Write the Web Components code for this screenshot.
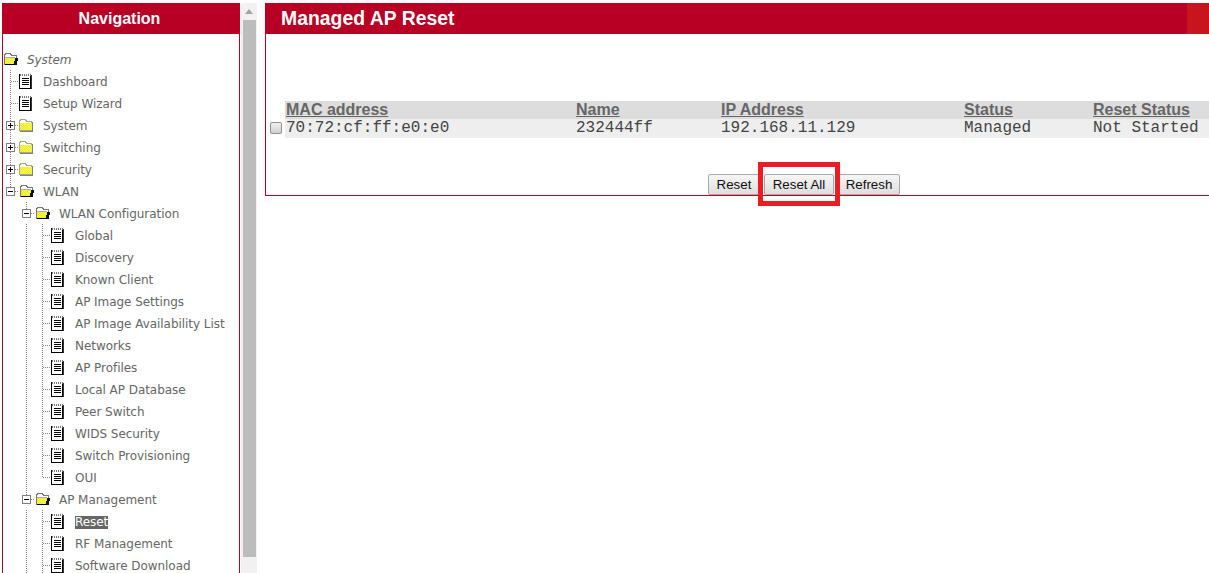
<!DOCTYPE html>
<html lang="en">
<head>
<meta charset="UTF-8">
<title>Managed AP Reset</title>
<style>
    html, body { margin: 0; height: 100%; overflow: hidden; background: #fff; }
</style>
</head>
<body>
<ap-page>
    <nav-panel slot="nav" title-text="Navigation"></nav-panel>
    <fake-scrollbar slot="scroll"></fake-scrollbar>
    <reset-panel slot="main" title-text="Managed AP Reset"></reset-panel>
</ap-page>

<script>
    const DOTS = '#808080';
    const DITHER = `<defs><pattern id="dither" width="2" height="2" patternUnits="userSpaceOnUse">
        <rect width="2" height="2" fill="#ffff00"/><rect width="1" height="1" fill="#e6e678"/><rect x="1" y="1" width="1" height="1" fill="#e6e678"/>
    </pattern></defs>`;
    const ICONS = {
        doc: `<svg width="16" height="18" viewBox="0 0 16 18" shape-rendering="crispEdges">
            <rect x="0.5" y="2.5" width="11" height="14" fill="#fff" stroke="#000"/>
            <path d="M1 2.5h11" stroke="#fff"/>
            <path d="M1 2.5h11M1 3.5h11" stroke="#777" stroke-dasharray="1 1"/>
            <path d="M3 6.5h7M3 8.5h7M3 10.5h7M3 12.5h7" stroke="#000"/>
            <path d="M12.5 3v14" stroke="#333"/>
        </svg>`,
        closed: `<svg width="16" height="16" viewBox="0 0 16 16" shape-rendering="crispEdges">
            ${DITHER}
            <path d="M0.5 4.5l1-2h5l1 2h5v9h-12z" fill="#fff" stroke="#a8a880"/>
            <rect x="1" y="6" width="12" height="7" fill="url(#dither)"/>
            <path d="M13.5 5v9.5H1" fill="none" stroke="#808080"/>
        </svg>`,
        open: `<svg width="16" height="16" viewBox="0 0 16 16" shape-rendering="crispEdges">
            ${DITHER}
            <path d="M1.5 4.5l1-2h5l1 2h5v9h-12z" fill="#fff" stroke="#777"/>
            <path d="M2 7h10l-1 6H2z" fill="url(#dither)"/>
            <path d="M2 6.5h10" stroke="#aaa"/>
            <path d="M12 7h3l-1 7h-3z" fill="#111"/>
            <path d="M2 13.5h10" stroke="#000"/>
        </svg>`
    };

    // one 16x22 connector cell of the tree
    function connector(kind) {
        const vFull = `<path d="M7.5 0v22" stroke="${DOTS}" stroke-dasharray="1 1"/>`;
        const vTop = `<path d="M7.5 0v11" stroke="${DOTS}" stroke-dasharray="1 1"/>`;
        const hLine = `<path d="M8 11.5h8" stroke="${DOTS}" stroke-dasharray="1 1"/>`;
        const box = `<rect x="3.5" y="7.5" width="8" height="8" fill="#fff" stroke="#808080"/><path d="M5 11.5h5" stroke="#000"/>`;
        let inner = '';
        if (kind === '|') inner = vFull;
        if (kind === 'T') inner = vFull + hLine;
        if (kind === 'L') inner = vTop + hLine;
        if (kind === '+') inner = vFull + hLine + box + `<path d="M7.5 9v5" stroke="#000"/>`;
        if (kind === '-') inner = vTop + hLine + box;
        return `<svg width="16" height="22" viewBox="0 0 16 22" shape-rendering="crispEdges">${inner}</svg>`;
    }

    class ApPage extends HTMLElement {
        constructor() {
            super();
            this.attachShadow({ mode: 'open' }).innerHTML = `
                <style>
                    :host { display: flex; height: 573px; overflow: hidden; padding: 3px 0 0 2px; box-sizing: border-box; font-family: "Liberation Sans", Arial, sans-serif; }
                    .main { flex: 1; min-width: 0; margin-left: 8px; }
                </style>
                <slot name="nav"></slot>
                <slot name="scroll"></slot>
                <div class="main"><slot name="main"></slot></div>
            `;
        }
    }

    class PanelTitle extends HTMLElement {
        constructor() {
            super();
            this.attachShadow({ mode: 'open' }).innerHTML = `
                <style>
                    :host { display: flex; height: 31px; background: #b80024; color: #fff; font-weight: bold; align-items: center; }
                    :host([center]) { justify-content: center; font-size: 16px; padding-right: 3px; }
                    :host(:not([center])) { font-size: 19.4px; padding-left: 15px; }
                </style>
                <slot></slot>
            `;
        }
    }

    class TreeNode extends HTMLElement {
        constructor() {
            super();
            this.attachShadow({ mode: 'open' });
        }
        connectedCallback() {
            const cells = (this.getAttribute('cells') || '').split('').map(connector).join('');
            const icon = ICONS[this.getAttribute('icon')];
            this.shadowRoot.innerHTML = `
                <style>
                    :host { display: flex; height: 22px; align-items: center; white-space: nowrap; font: 12px "DejaVu Sans", Verdana, sans-serif; color: #666; }
                    .cells { display: flex; height: 22px; }
                    .cells svg { display: block; }
                    .icon { width: 24px; height: 22px; display: flex; align-items: center; flex: none; }
                    .icon svg { display: block; }
                    .label { margin-top: 2px; line-height: 13px; letter-spacing: -0.05px; }
                    :host([italic]) .label { font-style: italic; }
                    :host([selected]) .label { background: #666; color: #fff; }
                </style>
                <span class="cells">${cells}</span>
                <span class="icon">${icon}</span>
                <span class="label"><slot></slot></span>
            `;
        }
    }

    const TREE = [
        ['', 'open', 'System', 'italic'],
        ['T', 'doc', 'Dashboard'],
        ['T', 'doc', 'Setup Wizard'],
        ['+', 'closed', 'System'],
        ['+', 'closed', 'Switching'],
        ['+', 'closed', 'Security'],
        ['-', 'open', 'WLAN'],
        [' -', 'open', 'WLAN Configuration'],
        [' |T', 'doc', 'Global'],
        [' |T', 'doc', 'Discovery'],
        [' |T', 'doc', 'Known Client'],
        [' |T', 'doc', 'AP Image Settings'],
        [' |T', 'doc', 'AP Image Availability List'],
        [' |T', 'doc', 'Networks'],
        [' |T', 'doc', 'AP Profiles'],
        [' |T', 'doc', 'Local AP Database'],
        [' |T', 'doc', 'Peer Switch'],
        [' |T', 'doc', 'WIDS Security'],
        [' |T', 'doc', 'Switch Provisioning'],
        [' |L', 'doc', 'OUI'],
        [' -', 'open', 'AP Management'],
        [' |T', 'doc', 'Reset', 'selected'],
        [' |T', 'doc', 'RF Management'],
        [' |T', 'doc', 'Software Download']
    ];

    class NavPanel extends HTMLElement {
        constructor() {
            super();
            this.attachShadow({ mode: 'open' });
        }
        connectedCallback() {
            const rows = TREE.map(([cells, icon, label, flag]) =>
                `<tree-node cells="${cells}" icon="${icon}" ${flag || ''}>${label}</tree-node>`).join('');
            this.shadowRoot.innerHTML = `
                <style>
                    :host { display: block; width: 238px; flex: none; height: 570px; box-sizing: border-box; border: solid #b80024; border-width: 0 1px; overflow: hidden; }
                    .tree { padding-top: 14px; }
                </style>
                <panel-title center>${this.getAttribute('title-text')}</panel-title>
                <div class="tree">${rows}</div>
            `;
        }
    }

    class FakeScrollbar extends HTMLElement {
        constructor() {
            super();
            this.attachShadow({ mode: 'open' }).innerHTML = `
                <style>
                    :host { display: flex; flex-direction: column; align-items: center; width: 16px; height: 570px; flex: none; margin-left: 1px; background: #f1f1f1; }
                    .arrow { height: 17px; flex: none; display: flex; align-items: center; justify-content: center; }
                    .thumb { width: 13px; height: 537px; background: #bcbcbc; flex: none; }
                </style>
                <div class="arrow"><svg width="8" height="5" viewBox="0 0 8 5"><path d="M4 0l4 5H0z" fill="#a3a3a3"/></svg></div>
                <div class="thumb"></div>
            `;
        }
    }

    class ResetPanel extends HTMLElement {
        constructor() {
            super();
            this.attachShadow({ mode: 'open' });
        }
        connectedCallback() {
            this.shadowRoot.innerHTML = `
                <style>
                    :host { display: block; box-sizing: border-box; height: 193px; border: solid #b80024; border-width: 0 0 1px 1px; overflow: visible; }
                    .head { position: relative; }
                    .corner { position: absolute; top: 0; right: 0; width: 22px; height: 31px; background: #c8141c; }
                    .table { margin-top: 67px; display: grid; grid-template-columns: 290px 145px 243px 129px 1fr; margin-left: 19px; }
                    .th { height: 18px; line-height: 18px; background: #ddd; color: #666; font-weight: bold; font-size: 16px; text-decoration: underline; padding-left: 1px; white-space: nowrap; }
                    .td { height: 19px; background: #eee; color: #444; font: 16px/19px "Liberation Mono", "Courier New", monospace; padding-left: 1px; white-space: nowrap; }
                    .cb { position: relative; }
                    .cb span { position: absolute; left: -15px; top: 3px; width: 10px; height: 10px; border: 1px solid #8f8f8f; border-radius: 2px; background: linear-gradient(#f0f0f0, #d0d0d0); }
                    .buttons { display: flex; gap: 4px; margin: 36px 0 0 442px; height: 21px; position: relative; }
                    button { height: 21px; box-sizing: border-box; padding: 0; border: 1px solid #a9a9a9; border-radius: 2px; background: linear-gradient(#f6f6f6, #dedede); font: 13.33px "Liberation Sans", Arial, sans-serif; color: #111; }
                    .hl { position: absolute; left: 50px; top: -12px; width: 82px; height: 44px; box-sizing: border-box; border: 5px solid #ed1c24; }
                </style>
                <div class="head">
                    <panel-title>${this.getAttribute('title-text')}</panel-title>
                    <div class="corner"></div>
                </div>
                <div class="table">
                    <div class="th">MAC address</div><div class="th">Name</div><div class="th">IP Address</div><div class="th">Status</div><div class="th">Reset Status</div>
                    <div class="td cb"><span></span>70:72:cf:ff:e0:e0</div><div class="td">232444ff</div><div class="td">192.168.11.129</div><div class="td">Managed</div><div class="td">Not Started</div>
                </div>
                <div class="buttons">
                    <button style="width:52px">Reset</button>
                    <button style="width:70px">Reset All</button>
                    <button style="width:62px">Refresh</button>
                    <div class="hl"></div>
                </div>
            `;
        }
    }

    customElements.define('panel-title', PanelTitle);
    customElements.define('tree-node', TreeNode);
    customElements.define('nav-panel', NavPanel);
    customElements.define('fake-scrollbar', FakeScrollbar);
    customElements.define('reset-panel', ResetPanel);
    customElements.define('ap-page', ApPage);
</script>
</body>
</html>
